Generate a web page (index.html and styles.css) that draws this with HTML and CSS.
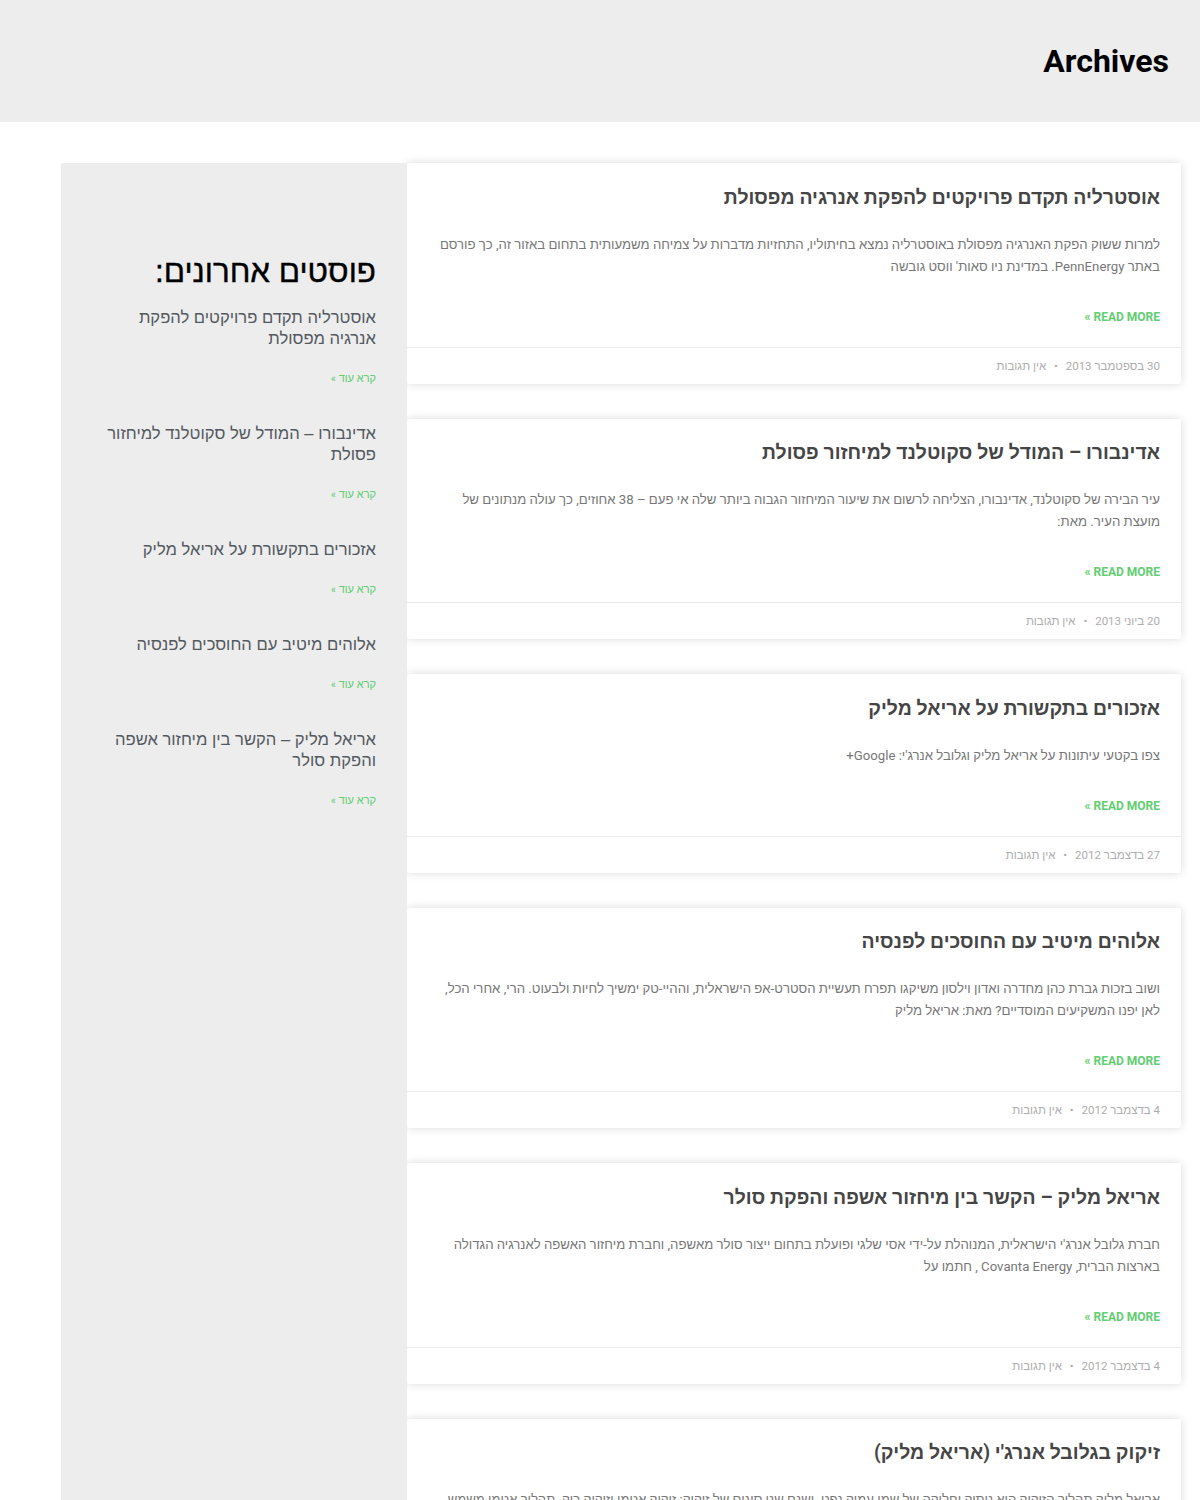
FILE: index.html
```html
<!DOCTYPE html>
<html lang="he" dir="rtl">
<head>
<meta charset="UTF-8">
<meta name="viewport" content="width=device-width, initial-scale=1.0">
<title>Archives</title>
<link rel="stylesheet" href="styles.css">
</head>
<body>

<!--כותרת העמוד-->
<header class="page-header">
  <h1 class="page-title">Archives</h1>
</header>

<div class="page-body">

  <!--רשימת הפוסטים-->
  <main class="posts">

    <article class="post-card">
      <div class="post-text">
        <h3 class="post-title">אוסטרליה תקדם פרויקטים להפקת אנרגיה מפסולת</h3>
        <p class="post-excerpt">למרות ששוק הפקת האנרגיה מפסולת באוסטרליה נמצא בחיתוליו, התחזיות מדברות על צמיחה משמעותית בתחום באזור זה, כך פורסם באתר PennEnergy. במדינת ניו סאות' ווסט גובשה</p>
        <a class="read-more" href="#">READ MORE »</a>
      </div>
      <div class="post-meta">30 בספטמבר 2013 <span class="sep">•</span> אין תגובות</div>
    </article>

    <article class="post-card">
      <div class="post-text">
        <h3 class="post-title">אדינבורו – המודל של סקוטלנד למיחזור פסולת</h3>
        <p class="post-excerpt">עיר הבירה של סקוטלנד, אדינבורו, הצליחה לרשום את שיעור המיחזור הגבוה ביותר שלה אי פעם – 38 אחוזים, כך עולה מנתונים של מועצת העיר. מאת:</p>
        <a class="read-more" href="#">READ MORE »</a>
      </div>
      <div class="post-meta">20 ביוני 2013 <span class="sep">•</span> אין תגובות</div>
    </article>

    <article class="post-card">
      <div class="post-text">
        <h3 class="post-title">אזכורים בתקשורת על אריאל מליק</h3>
        <p class="post-excerpt">צפו בקטעי עיתונות על אריאל מליק וגלובל אנרג'י: Google+</p>
        <a class="read-more" href="#">READ MORE »</a>
      </div>
      <div class="post-meta">27 בדצמבר 2012 <span class="sep">•</span> אין תגובות</div>
    </article>

    <article class="post-card">
      <div class="post-text">
        <h3 class="post-title">אלוהים מיטיב עם החוסכים לפנסיה</h3>
        <p class="post-excerpt">ושוב בזכות גברת כהן מחדרה ואדון וילסון משיקגו תפרח תעשיית הסטרט-אפ הישראלית, וההיי-טק ימשיך לחיות ולבעוט. הרי, אחרי הכל, לאן יפנו המשקיעים המוסדיים? מאת: אריאל מליק</p>
        <a class="read-more" href="#">READ MORE »</a>
      </div>
      <div class="post-meta">4 בדצמבר 2012 <span class="sep">•</span> אין תגובות</div>
    </article>

    <article class="post-card">
      <div class="post-text">
        <h3 class="post-title">אריאל מליק – הקשר בין מיחזור אשפה והפקת סולר</h3>
        <p class="post-excerpt">חברת גלובל אנרג'י הישראלית, המנוהלת על-ידי אסי שלגי ופועלת בתחום ייצור סולר מאשפה, וחברת מיחזור האשפה לאנרגיה הגדולה בארצות הברית, Covanta Energy , חתמו על</p>
        <a class="read-more" href="#">READ MORE »</a>
      </div>
      <div class="post-meta">4 בדצמבר 2012 <span class="sep">•</span> אין תגובות</div>
    </article>

    <article class="post-card">
      <div class="post-text">
        <h3 class="post-title">זיקוק בגלובל אנרג'י (אריאל מליק)</h3>
        <p class="post-excerpt">אריאל מליק תהליך הזיקוק הוא ניתוק וחלוקה של שמן עמוק נפט. ישנם שני סוגים של זיקוק: זיקוק אטמי וזיקוק ריק. תהליך אטמי משמש להפרדת הנפט הגולמי לרכיביו השונים</p>
        <a class="read-more" href="#">READ MORE »</a>
      </div>
      <div class="post-meta">4 בדצמבר 2012 <span class="sep">•</span> אין תגובות</div>
    </article>

  </main>

  <!--סרגל צד-->
  <aside class="sidebar">
    <h2 class="sidebar-title">פוסטים אחרונים:</h2>

    <div class="recent-item">
      <h4 class="recent-title">אוסטרליה תקדם פרויקטים להפקת אנרגיה מפסולת</h4>
      <a class="recent-more" href="#">קרא עוד »</a>
    </div>
    <div class="recent-item">
      <h4 class="recent-title">אדינבורו – המודל של סקוטלנד למיחזור פסולת</h4>
      <a class="recent-more" href="#">קרא עוד »</a>
    </div>
    <div class="recent-item">
      <h4 class="recent-title">אזכורים בתקשורת על אריאל מליק</h4>
      <a class="recent-more" href="#">קרא עוד »</a>
    </div>
    <div class="recent-item">
      <h4 class="recent-title">אלוהים מיטיב עם החוסכים לפנסיה</h4>
      <a class="recent-more" href="#">קרא עוד »</a>
    </div>
    <div class="recent-item">
      <h4 class="recent-title">אריאל מליק – הקשר בין מיחזור אשפה והפקת סולר</h4>
      <a class="recent-more" href="#">קרא עוד »</a>
    </div>
  </aside>

</div>

</body>
</html>
```

FILE: styles.css
```css
/* בסיס */
body {
  margin: 0;
  background: #fff;
  font-family: Roboto, "Liberation Sans", sans-serif;
}

/* כותרת העמוד */
.page-header {
  height: 122px;
  display: flex;
  align-items: center;
  padding: 0 31px;
  background: #ededed;
}

.page-title {
  margin: 0;
  font-size: 32px;
  font-weight: 700;
  color: #000;
}

/* גוף העמוד */
.page-body {
  display: flex;
  margin: 41px 19px 0 61px;
}

.posts {
  width: 774px;
  flex-shrink: 0;
}

/* כרטיס פוסט */
.post-card {
  background: #fff;
  border-radius: 3px;
  box-shadow: 0 0 10px 0 rgba(0, 0, 0, .15);
  margin-bottom: 35px;
  overflow: hidden;
}

.post-text {
  padding: 22.5px 21px 22px;
}

.post-title {
  margin: 0 0 24px;
  font-size: 19.4px;
  line-height: 24px;
  font-weight: 700;
  color: #454545;
}

.post-excerpt {
  margin: 0 0 31px;
  font-size: 13.2px;
  line-height: 22px;
  color: #777;
}

.read-more {
  display: block;
  font-size: 12px;
  line-height: 16px;
  font-weight: 700;
  color: #61ce70;
  text-decoration: none;
}

.post-meta {
  border-top: 1px solid #eaeaea;
  padding: 10px 21px;
  font-size: 11.5px;
  line-height: 16px;
  color: #adadad;
}

.post-meta .sep {
  margin: 0 5px;
}

/* סרגל צד */
.sidebar {
  flex: 1;
  background: #ededed;
  padding: 91px 31px 40px;
}

.sidebar-title {
  margin: 0 0 17px;
  font-family: "Liberation Sans", sans-serif;
  font-size: 31.4px;
  line-height: 36px;
  font-weight: 400;
  color: #000;
  -webkit-text-stroke: 0.4px #000;
}

.recent-item {
  margin-bottom: 37px;
}

.recent-title {
  margin: 0 0 23px;
  font-family: "Liberation Sans", sans-serif;
  font-size: 16.6px;
  line-height: 21px;
  font-weight: 400;
  color: #54595f;
}

.recent-more {
  display: block;
  font-size: 11px;
  line-height: 14px;
  color: #61ce70;
  text-decoration: none;
}
```
